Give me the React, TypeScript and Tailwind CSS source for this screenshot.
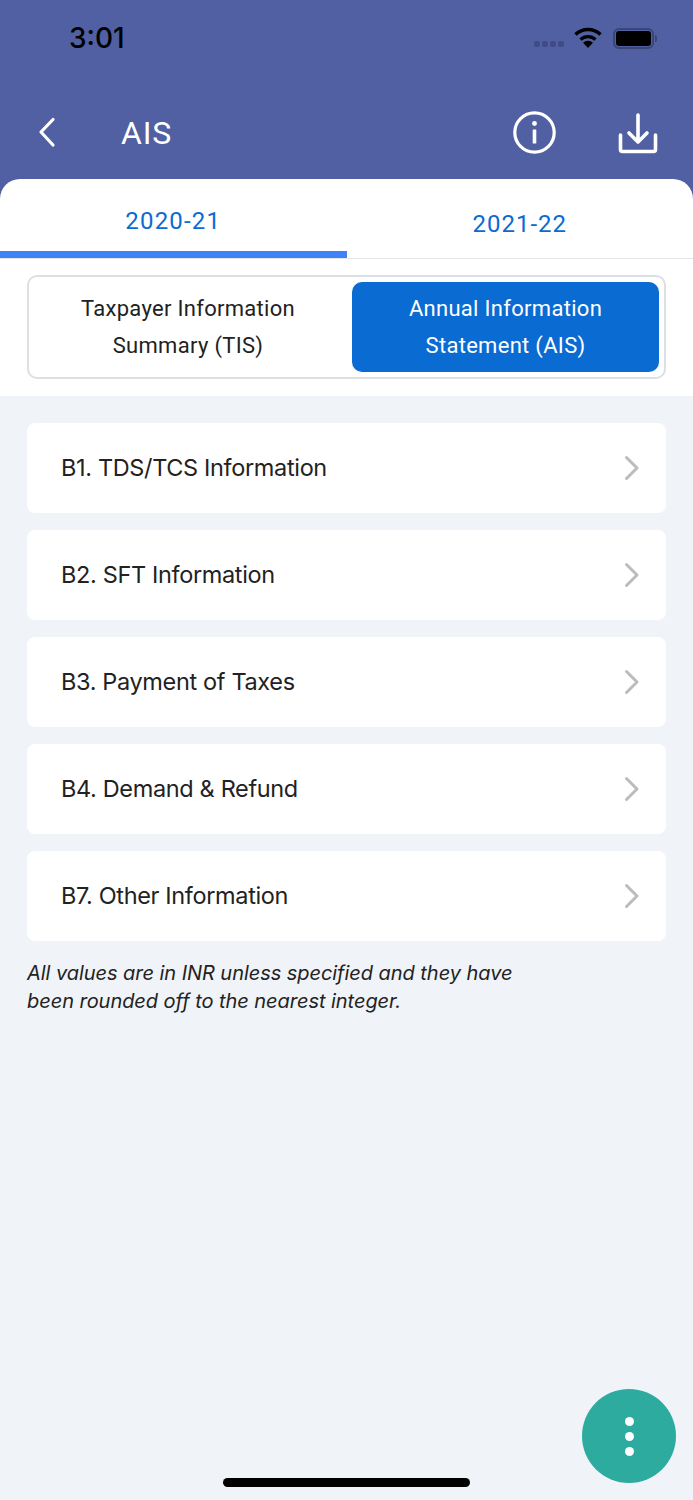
const ROWS = [
  "B1. TDS/TCS Information",
  "B2. SFT Information",
  "B3. Payment of Taxes",
  "B4. Demand & Refund",
  "B7. Other Information",
];

function StatusBar() {
  return (
    <div className="flex h-[76px] items-center justify-between pl-[69px] pr-[36px]">
      <span className="text-[28px] font-medium text-black font-['Inter',sans-serif]">3:01</span>
      <div className="flex items-center">
        <div className="mt-[12px] mr-[10px] flex gap-[2px]">
          <span className="size-[6px] rounded-[2px] bg-[#3f4c85]" />
          <span className="size-[6px] rounded-[2px] bg-[#3f4c85]" />
          <span className="size-[6px] rounded-[2px] bg-[#3f4c85]" />
          <span className="size-[6px] rounded-[2px] bg-[#3f4c85]" />
        </div>
        <svg width="28" height="22" viewBox="0 0 28 22" className="mr-[11px]" aria-hidden>
          <path d="M1.5 7.5a18 18 0 0 1 25 0" fill="none" stroke="#000" strokeWidth="3.4" />
          <path d="M6.5 12.5a11 11 0 0 1 15 0" fill="none" stroke="#000" strokeWidth="3.2" />
          <path d="M14 21l-5-5.2a7 7 0 0 1 10 0z" fill="#000" />
        </svg>
        <div className="flex h-[21px] w-[41px] items-center justify-center rounded-[6px] border-2 border-[#3a4678]">
          <div className="h-[15px] w-[35px] rounded-[3px] bg-black" />
        </div>
        <div className="ml-[1px] h-[7px] w-[2px] rounded-r-[2px] bg-[#3a4678]" />
      </div>
    </div>
  );
}

function Header() {
  return (
    <div className="flex h-[103px] items-start bg-[#5060a2] pl-[37px] pr-[35px]">
      <svg width="20" height="32" viewBox="0 0 20 32" className="mt-[40px]" aria-hidden>
        <path d="M16 3.5 4 16l12 13" fill="none" stroke="#fff" strokeWidth="3.2" strokeLinecap="round" strokeLinejoin="round" />
      </svg>
      <span className="ml-[64px] mt-[36px] text-[32px] leading-[42px] tracking-[0.8px] text-white">AIS</span>
      <div className="ml-auto mt-[35px] flex items-start">
        <svg width="43" height="43" viewBox="0 0 43 43" className="mr-[62px]" aria-hidden>
          <circle cx="21.5" cy="21.5" r="19.7" fill="none" stroke="#fff" strokeWidth="3.2" />
          <rect x="19.7" y="18.5" width="3.6" height="14" rx="0.6" fill="#fff" />
          <circle cx="21.5" cy="12.5" r="2.4" fill="#fff" />
        </svg>
        <svg width="40" height="41" viewBox="0 0 40 41" className="mt-[2px]" aria-hidden>
          <path d="M20 2v27M11 20l9 9 9-9" fill="none" stroke="#fff" strokeWidth="3.6" strokeLinecap="round" strokeLinejoin="round" />
          <path d="M2.5 22v14.5a2 2 0 0 0 2 2h31a2 2 0 0 0 2-2V22" fill="none" stroke="#fff" strokeWidth="3.6" strokeLinecap="round" />
        </svg>
      </div>
    </div>
  );
}

function YearTabs() {
  return (
    <div className="flex h-[80px] border-b border-[#e4e6ea]">
      <div className="flex w-1/2 flex-col border-b-[7px] border-[#3f82f5]">
        <span className="pt-[26px] text-center text-[24px] leading-[32px] tracking-[1.2px] text-[#0a6bd3]">2020-21</span>
      </div>
      <div className="w-1/2">
        <span className="block pt-[29px] text-center text-[24px] leading-[32px] tracking-[1px] text-[#0a6bd3]">2021-22</span>
      </div>
    </div>
  );
}

function Segments() {
  return (
    <div className="px-[27px] pt-[16px] pb-[17px]">
      <div className="flex h-[104px] gap-[5px] rounded-[10px] border-2 border-[#dcdfe3] py-[5px] pr-[5px]">
        <div className="flex w-[318px] items-center justify-center text-center text-[22px] leading-[37px] tracking-[0.3px] text-[#222]">
          <span>Taxpayer Information<br />Summary (TIS)</span>
        </div>
        <div className="flex flex-1 items-center justify-center rounded-[10px] bg-[#0a6bd3] text-center text-[22px] leading-[37px] tracking-[0.3px] text-white">
          <span>Annual Information<br />Statement (AIS)</span>
        </div>
      </div>
    </div>
  );
}

export default function App() {
  return (
    <div className="relative h-[1500px] w-[693px] overflow-hidden bg-[#5060a2] font-['Roboto',sans-serif]">
      <StatusBar />
      <Header />
      <div className="rounded-t-[20px] bg-white">
        <YearTabs />
        <Segments />
      </div>
      <div className="h-[1104px] bg-[#f0f3f7] px-[27px] pt-[27px]">
        <ul className="flex flex-col gap-[17px]">
          {ROWS.map((row) => (
            <li key={row} className="flex h-[90px] items-center justify-between rounded-[8px] bg-white pl-[34px] pr-[26px]">
              <span className="font-['Inter',sans-serif] text-[23.5px] tracking-[-0.35px] text-[#222]">{row}</span>
              <svg width="16" height="26" viewBox="0 0 16 26" aria-hidden>
                <path d="M2.5 2.5 13 13 2.5 23.5" fill="none" stroke="#bcbcbc" strokeWidth="3" strokeLinecap="round" strokeLinejoin="round" />
              </svg>
            </li>
          ))}
        </ul>
        <p className="mt-[18px] font-['Inter',sans-serif] text-[20px] italic leading-[28px] tracking-[-0.05px] text-[#222]">
          All values are in INR unless specified and they have<br />
          been rounded off to the nearest integer.
        </p>
      </div>
      <button className="absolute left-[582px] top-[1389px] flex size-[94px] flex-col items-center justify-center gap-[6px] rounded-full bg-[#2eab9f]">
        <span className="size-[9px] rounded-full bg-white" />
        <span className="size-[9px] rounded-full bg-white" />
        <span className="size-[9px] rounded-full bg-white" />
      </button>
      <div className="absolute left-[223px] top-[1478px] h-[9px] w-[247px] rounded-full bg-black" />
    </div>
  );
}
